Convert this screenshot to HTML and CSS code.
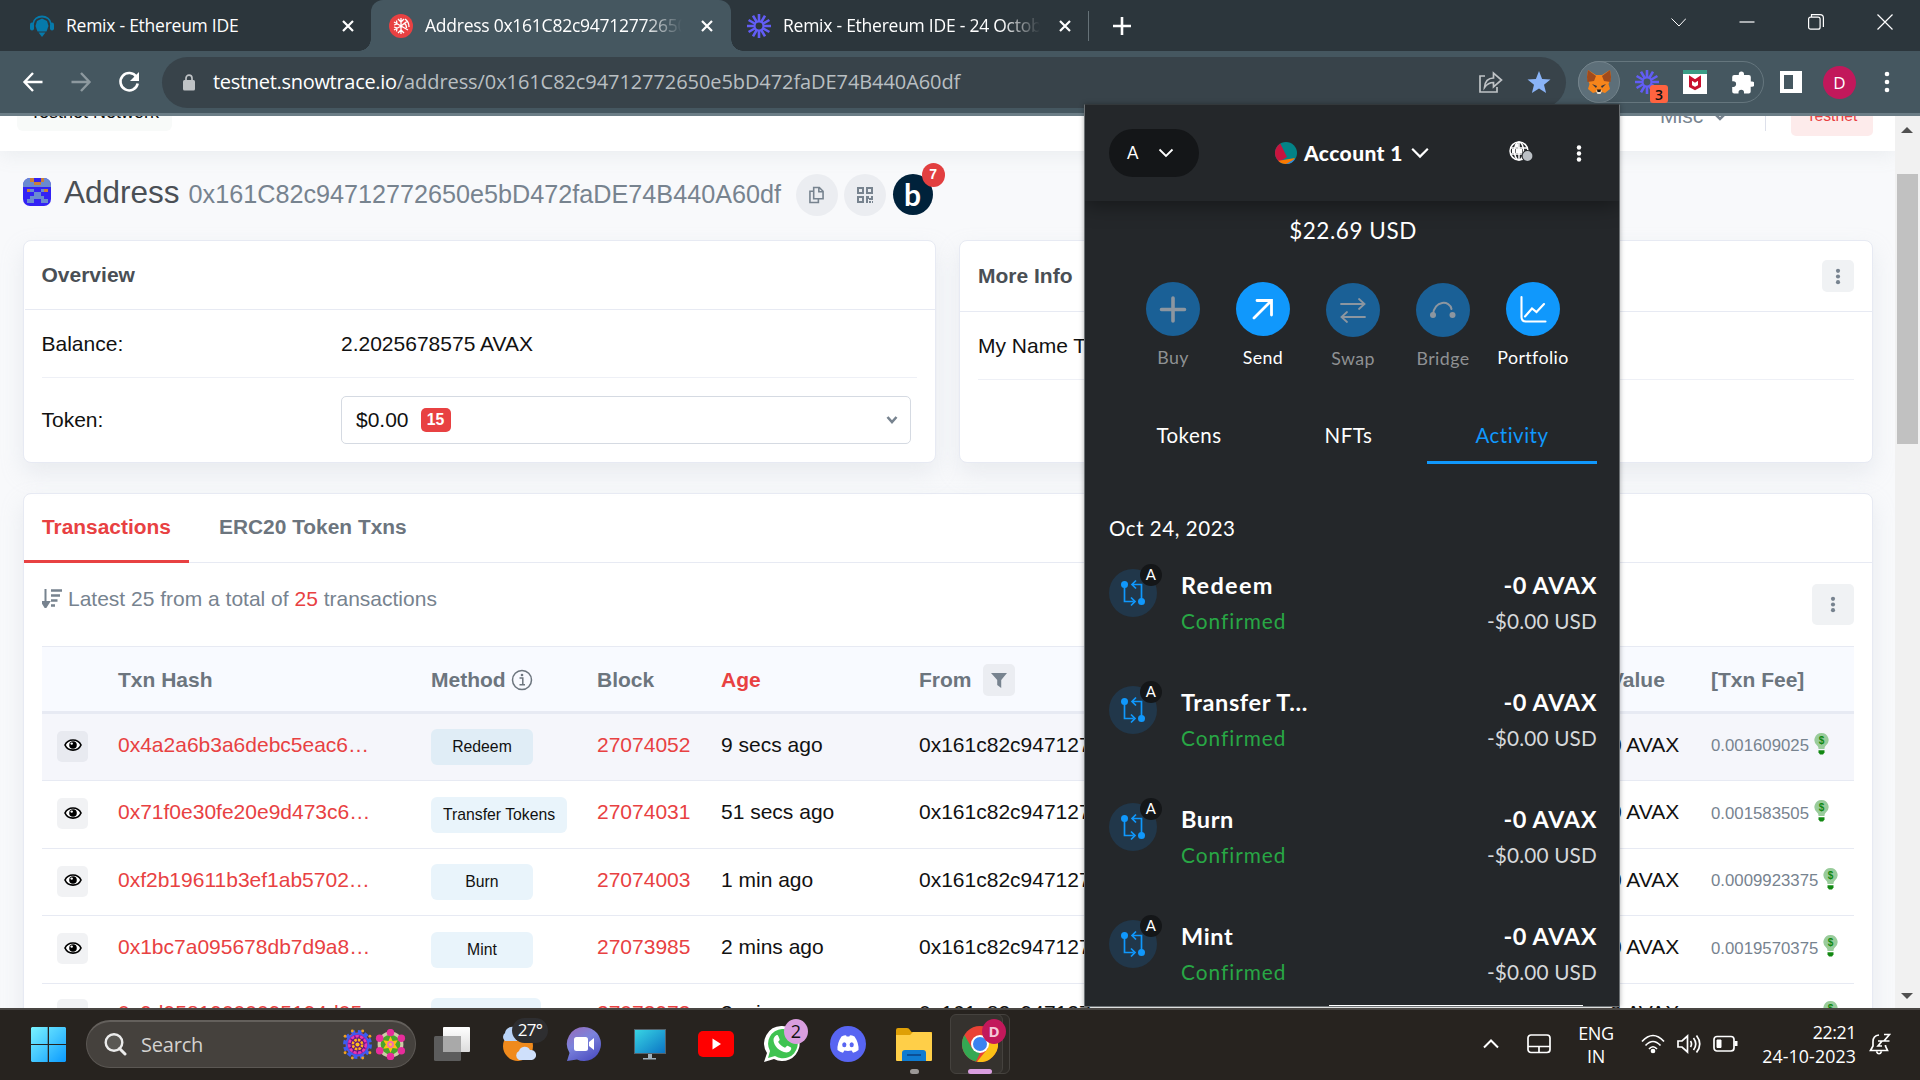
FILE: index.html
```html
<!DOCTYPE html>
<html lang="en">
<head>
<meta charset="utf-8">
<title>Address 0x161C82c94712772650e5bD472faDE74B440A60df</title>
<link rel="stylesheet" href="styles.css">
</head>
<body>
<svg class="defs" width="0" height="0">
  <symbol id="x" viewBox="0 0 14 14"><path d="M2 2l10 10M12 2L2 12" stroke="currentColor" stroke-width="2.2" fill="none"/></symbol>
  <symbol id="burst" viewBox="-12 -12 24 24"><g stroke="#625df5" stroke-width="2.6"><path d="M0-12V-4M0 4v8M-12 0h8M4 0h8M-10.4-6l6.9 4M3.5 2l6.9 4M-10.4 6l6.9-4M3.5-2l6.9-4M-6-10.4l4 6.9M2 3.5l4 6.9M6-10.4l-4 6.9M-2 3.5l-4 6.9"/><circle r="4.4" fill="none" stroke-width="2"/></g></symbol>
  <symbol id="chev" viewBox="0 0 16 10"><path d="M1.5 1.5L8 8l6.500-6.500" fill="none" stroke="currentColor" stroke-width="1.8"/></symbol>
  <symbol id="dots" viewBox="0 0 6 18"><circle cx="3" cy="3" r="2.200"/><circle cx="3" cy="9" r="2.200"/><circle cx="3" cy="15" r="2.200"/></symbol>
  <symbol id="eye" viewBox="0 0 18 14"><path d="M1 7C4 .3 14 .3 17 7C14 13.700 4 13.700 1 7Z" fill="#fff" stroke="#000" stroke-width="1.700"/><circle cx="9" cy="7" r="3.800"/><circle cx="7.700" cy="5.600" r="1.200" fill="#fff"/></symbol>
  <symbol id="bulb" viewBox="0 0 15 22"><path d="M7.500 0a7 7 0 0 0-4.400 12.500c1 1 1.400 2 1.400 3.500h6c0-1.500.4-2.500 1.400-3.500A7 7 0 0 0 7.500 0z" fill="#99cc9b"/><path d="M4.500 17.200h6v2.300L9 21.600H6l-1.500-2z" fill="#128812"/><text x="7.500" y="11" text-anchor="middle" font-family="Liberation Sans" font-weight="700" font-size="10" fill="#128812">$</text></symbol>
  <symbol id="swapact" viewBox="0 0 48 48"><circle cx="24" cy="24" r="24" fill="#21374a"/><g fill="none" stroke="#1098fc" stroke-width="1.700"><path d="M15.500 16v16.500h9M22 28.500l4 4-4 4M32.500 32V15.500h-9M27 11.500l-4 4 4 4"/></g><circle cx="15.500" cy="15.500" r="3.500" fill="#1098fc"/><circle cx="32.500" cy="32.500" r="3.500" fill="#1098fc"/></symbol>
</svg>

<div class="browser">
  <div class="tabstrip">
    <div class="tab tab-first">
      <svg class="favicon" viewBox="0 0 24 24"><g fill="#067aab"><path d="M12 4.500l5 2.500 1.500 5-2 5.500h-9L5.500 12 7 7z"/><path d="M8.500 18.500h7L12 23z"/><rect x="0" y="8.500" width="4" height="8" rx="2"/><rect x="20" y="8.500" width="4" height="8" rx="2"/></g><path d="M3 10C4 0 20 0 21 10" fill="none" stroke="#067aab" stroke-width="1.800"/></svg>
      <span class="tab-title">Remix - Ethereum IDE</span>
      <svg class="tab-x"><use href="#x"/></svg>
    </div>
    <div class="tab tab-active">
      <svg class="favicon" viewBox="0 0 24 24"><circle cx="12" cy="12" r="12" fill="#e84142"/><g stroke="#fff" stroke-width="1.300" fill="none"><path d="M12 4v16M5 8l7 4 7 4M5 16l7-4 6.500-5M9 5l3 3 3-3M9 19l3-3 3 3M5 11l3-1-.5-3.500M5 13l3 1-.5 3.500M15 9c2 1 2.500 3 2.500 5M16 5c3 2 4 5 4 8"/></g></svg>
      <span class="tab-title fade">Address 0x161C82c94712772650e5bD</span>
      <svg class="tab-x"><use href="#x"/></svg>
    </div>
    <div class="tab tab-last">
      <svg class="favicon"><use href="#burst"/></svg>
      <span class="tab-title fade">Remix - Ethereum IDE - 24 October</span>
      <svg class="tab-x"><use href="#x"/></svg>
    </div>
    <svg class="new-tab" viewBox="0 0 18 18"><path d="M9 0v18M0 9h18" stroke="#fff" stroke-width="2.600"/></svg>
    <div class="win-controls">
      <svg viewBox="0 0 16 16"><path d="M1.500 4.500L9 12l7-7.500" stroke-width="1"/></svg>
      <svg viewBox="0 0 16 16"><path d="M0.500 8h15"/></svg>
      <svg viewBox="0 0 16 16"><rect x=".6" y="3.200" width="11.500" height="12" rx="2"/><path d="M3.500 3V.6H12c2 0 3.400 1.400 3.400 3.400V13"/></svg>
      <svg viewBox="0 0 16 16"><path d="M.5.5l15 15M15.500.5l-15 15"/></svg>
    </div>
  </div>

  <div class="toolbar">
    <div class="nav">
      <svg viewBox="0 0 22 22"><path d="M20.500 11H3M11 2L2.500 11l8.500 9" stroke="#fff"/></svg>
      <svg viewBox="0 0 22 22"><path d="M1.500 11H19M11 2l8.500 9-8.500 9" stroke="#8d999f"/></svg>
      <svg viewBox="0 0 22 22"><path d="M18.500 6A8.700 8.700 0 1 0 19.700 12.500" stroke="#fff" stroke-width="2.600"/><path d="M21 1v9h-9z" fill="#fff"/></svg>
    </div>
    <div class="omnibox">
      <svg class="lock" viewBox="0 0 12 16"><rect y="5.500" width="12" height="10.500" rx="1.500" fill="#bfc3c6"/><path d="M3 6V3.700a3 3 0 0 1 6 0V6" fill="none" stroke="#bfc3c6" stroke-width="1.700"/></svg>
      <span class="url"><b>testnet.snowtrace.io</b><span>/address/0x161C82c94712772650e5bD472faDE74B440A60df</span></span>
      <svg class="share" viewBox="0 0 24 22"><path d="M1 8v13h17v-5M5.500 16.500c.5-6 3-9.500 9-9.500V2l8 7-8 7v-4.500c-4.500 0-6.500 1.500-9 5zM1 8V5h5" fill="none" stroke="#bfc3c6" stroke-width="1.700"/></svg>
      <svg class="star" viewBox="0 0 24 24"><path d="M12 1l3.100 7.900 8.400.5-6.500 5.400 2.100 8.200L12 18.400 4.900 23 7 14.800.5 9.400l8.400-.5z" fill="#8ab4f8"/></svg>
    </div>
    <div class="extensions">
      <span class="fox-bg"><svg viewBox="0 0 24 24"><path d="M1 0l8 5h6l8-5 1 8-2.500 6 1.500 5-5 4-3-1-2 2h-2l-2-2-3 1-5-4 1.500-5L0 8z" fill="#f6851b"/><path d="M1 0l8 6-2 5-6.500 1L0 7zM23 0l-8 6 2 5 6.500 1L24 7z" fill="#a04a1c"/><path d="M5 14l5 2-1 2zM19 14l-5 2 1 2z" fill="#33323e"/><path d="M9 20.500h6L13.500 24h-3z" fill="#e8e0d5"/><path d="M10 19.500h4l-.5 2.500h-3z" fill="#161616"/></svg></span>
      <span class="loom"><svg><use href="#burst"/></svg><i>3</i></span>
      <svg class="shield" viewBox="0 0 24 24"><path fill="#fff" d="M0 0h24v24H0z"/><path fill="#3b9d86" d="M0 0h24v4H0z"/><path d="M7.500 8v8L12 18.500l4.500-2.500V8L12 11z" fill="none" stroke="#c8102e" stroke-width="3"/></svg>
      <svg class="puzzle" viewBox="0 0 22 22"><path d="M20 10h-1.200V5.500a2 2 0 0 0-2-2H12V2.700a2.600 2.600 0 0 0-5.200 0v.8H2.200a2 2 0 0 0-2 2v4.300h1.100a2.800 2.800 0 0 1 0 5.600H.2V20a2 2 0 0 0 2 2h4.300v-1.100a2.700 2.700 0 0 1 5.500 0V22h4.700a2 2 0 0 0 2-2v-4.700H20a2.600 2.600 0 0 0 0-5.300z" fill="#fff"/></svg>
    </div>
    <svg class="panel-ic" viewBox="0 0 22 22"><path d="M0 0h22v22H0z" fill="#fff"/><path d="M4 4h9v14H4z" fill="#455760"/></svg>
    <span class="profile">D</span>
    <svg class="menu-dots" viewBox="0 0 6 24"><circle cx="3" cy="4" r="2.300"/><circle cx="3" cy="12" r="2.300"/><circle cx="3" cy="20" r="2.300"/></svg>
  </div>

  <div class="viewport">
    <main class="content">
      <header class="site-header">
        <span class="network">Testnet Network</span>
        <span class="misc">Misc <svg viewBox="0 0 14 9"><path d="M2 2l5 5 5-5" fill="none" stroke="#77838f" stroke-width="2.600"/></svg></span>
        <span class="vline"></span>
        <span class="testnet">Testnet</span>
      </header>

      <div class="title-row">
        <svg class="identicon" viewBox="0 0 8 8" shape-rendering="crispEdges" preserveAspectRatio="none"><path fill="#3322f5" d="M0 0h8v8H0z"/><path fill="#6a8ad0" d="M0 0h3v1H0zM5 0h3v1H5zM0 1h3v1H0zM5 1h3v1H5zM0 2h8v.7H0zM2 3h1v1H2zM5 3h1v1H5zM3 4h2v1H3zM2 5h1v2H2zM5 5h1v2H5zM3 5h2v1H3zM1 6h1v1H1zM6 6h1v1H6z"/><path fill="#c8803a" d="M2 0h1v1H2zM5 0h1v1H5zM3 1h2v1H3zM1 3h1v1H1zM6 3h1v1H6z"/></svg>
        <h1>Address</h1>
        <span class="addr">0x161C82c94712772650e5bD472faDE74B440A60df</span>
        <span class="round"><svg viewBox="0 0 16 18" width="15" height="18"><path d="M5 1h6l4 4v8H5zM5 5H1v12h9v-4M10.500 1v4.500H15" fill="none" stroke="#77838f" stroke-width="1.700"/></svg></span>
        <span class="round r2"><svg viewBox="0 0 16 16" width="16" height="16"><g fill="none" stroke="#77838f" stroke-width="2"><path d="M1 1h5v5H1zM10 1h5v5h-5zM1 10h5v5H1z"/></g><path d="M9 9h3v2h2V9h2v4h-4v-1h-1v4H9zM12 14h2v2h-2zM15 14h1v2h-1z" fill="#77838f"/></svg></span>
        <span class="b-logo">b<i>7</i></span>
      </div>

      <div class="cards">
        <section class="card overview">
          <div class="card-head">Overview</div>
          <div class="kv"><span>Balance:</span><span>2.2025678575 AVAX</span></div>
          <div class="kv kv-token"><span>Token:</span><div class="select">$0.00<i>15</i><svg viewBox="0 0 14 10"><path d="M2.500 2l4.500 5 4.500-5" fill="none" stroke="#77838f" stroke-width="2.600"/></svg></div></div>
        </section>
        <section class="card info">
          <div class="card-head">More Info<span class="dot-btn"><svg><use href="#dots"/></svg></span></div>
          <div class="kv"><span>My Name Tag:</span></div>
        </section>
      </div>

      <section class="card txns">
        <div class="txn-tabs"><span class="on">Transactions</span><span>ERC20 Token Txns</span></div>
        <div class="summary">
          <svg viewBox="0 0 20 19"><path d="M3.500 0v14M0 13h7l-3.500 5.500z" stroke="#77838f" stroke-width="2" fill="#77838f"/><path d="M9 1.500h11M9 6.500h9M9 11.500h6.500M9 16.500h4" stroke="#77838f" stroke-width="2.400"/></svg>
          <span>Latest 25 from a total of <b>25</b> transactions</span>
          <span class="dot-btn wide"><svg><use href="#dots"/></svg></span>
        </div>
        <div class="table">
          <div class="row head"><span></span><span>Txn Hash</span><span class="inl">Method <svg class="inf" viewBox="0 0 22 22"><circle cx="11" cy="11" r="9.500" fill="none" stroke="#6c757e" stroke-width="1.500"/><path d="M8.500 9h3.300v6.500M8.500 15.700h5.500" fill="none" stroke="#6c757e" stroke-width="1.500"/><circle cx="11" cy="6" r="1.300" fill="#6c757e"/></svg></span><span>Block</span><span class="red">Age</span><span class="inl">From <i class="filter"><svg viewBox="0 0 18 18"><path d="M0 1h18l-6.500 8v9L7 14.500V9z" fill="#77838f"/></svg></i></span><span class="val">Value</span><span>[Txn Fee]</span></div>
          <div class="row hover"><i class="eye"><svg><use href="#eye"/></svg></i><a>0x4a2a6b3a6debc5eac6…</a><em>Redeem</em><a>27074052</a><span>9 secs ago</span><span>0x161c82c947127</span><span class="val">0 AVAX</span><small>0.001609025<svg><use href="#bulb"/></svg></small></div>
          <div class="row"><i class="eye"><svg><use href="#eye"/></svg></i><a>0x71f0e30fe20e9d473c6…</a><em>Transfer Tokens</em><a>27074031</a><span>51 secs ago</span><span>0x161c82c947127</span><span class="val">0 AVAX</span><small>0.001583505<svg><use href="#bulb"/></svg></small></div>
          <div class="row"><i class="eye"><svg><use href="#eye"/></svg></i><a>0xf2b19611b3ef1ab5702…</a><em>Burn</em><a>27074003</a><span>1 min ago</span><span>0x161c82c947127</span><span class="val">0 AVAX</span><small>0.0009923375<svg><use href="#bulb"/></svg></small></div>
          <div class="row"><i class="eye"><svg><use href="#eye"/></svg></i><a>0x1bc7a095678db7d9a8…</a><em>Mint</em><a>27073985</a><span>2 mins ago</span><span>0x161c82c947127</span><span class="val">0 AVAX</span><small>0.0019570375<svg><use href="#bulb"/></svg></small></div>
          <div class="row last"><i class="eye"><svg><use href="#eye"/></svg></i><a>0x9d95819000095194d05…</a><em>Add Liquidity</em><a>27073973</a><span>3 mins ago</span><span>0x161c82c947127</span><span class="val">0 AVAX</span><small>0.0025703750<svg><use href="#bulb"/></svg></small></div>
        </div>
      </section>
    </main>
    <div class="scrollbar"><i class="up"></i><span class="thumb"></span><i class="down"></i></div>
  </div>

  <aside class="wallet">
    <div class="w-head">
      <span class="w-net">A<svg><use href="#chev"/></svg></span>
      <span class="w-acct"><svg class="jazz" viewBox="0 0 22 22"><clipPath id="jc"><circle cx="11" cy="11" r="11"/></clipPath><g clip-path="url(#jc)"><path fill="#038387" d="M0 0h22v22H0z"/><path fill="#c8143e" d="M-2 4L5 1l7 14-8 5-6-2z"/><path fill="#fa7900" d="M2 19l18-3-6 8H4z"/><path fill="#1d8cf0" d="M11 22l9-5 2 5z"/></g></svg>Account 1<svg class="big"><use href="#chev"/></svg></span>
      <span class="w-icons"><svg class="globe" viewBox="0 0 24 22"><g fill="none" stroke="#fff" stroke-width="1.500"><circle cx="10" cy="10" r="9"/><ellipse cx="10" cy="10" rx="4.500" ry="9"/><path d="M1 7h18M1 13h18M10 1v18"/></g><path d="M3 8h3v4H3zM7 8h6v4H7zM7 2.500h2.500V6H6z" fill="#fff"/><circle cx="18.500" cy="15" r="6" fill="#24272a"/><circle cx="18.500" cy="15" r="4.900" fill="#bbc0c5"/></svg><svg class="wd"><use href="#dots"/></svg></span>
    </div>
    <div class="w-balance">$22.69 USD</div>
    <div class="w-actions">
      <div class="off"><svg viewBox="0 0 54 54"><circle cx="27" cy="27" r="27"/><path d="M27 16v23M15.500 27.500h23" stroke-width="3.600"/></svg>Buy</div>
      <div><svg viewBox="0 0 54 54"><circle cx="27" cy="27" r="27"/><path d="M18 36l17-17M21 18.500h14.500V33" stroke-width="2.800"/></svg>Send</div>
      <div class="off low"><svg viewBox="0 0 54 54"><circle cx="27" cy="27" r="27"/><path d="M15 21h23M33 16l5.500 5-5.500 5M39 34H16M21 29l-5.500 5 5.500 5" stroke-width="1.800"/></svg>Swap</div>
      <div class="off low"><svg viewBox="0 0 54 54"><circle cx="27" cy="27" r="27"/><path d="M17 32C18 17 34 17 35.500 26" stroke-width="2"/><g class="nodes"><circle cx="17" cy="32" r="3"/><circle cx="36.500" cy="32" r="3"/></g></svg>Bridge</div>
      <div><svg viewBox="0 0 54 54"><circle cx="27" cy="27" r="27"/><path d="M15.500 15v20q0 4.500 4.500 4.500h19.500M19 34.500l7-8 4.500 3.500 7.500-8" stroke-width="2.100"/></svg>Portfolio</div>
    </div>
    <div class="w-tabs"><span>Tokens</span><span>NFTs</span><span class="on">Activity</span></div>
    <div class="w-date">Oct 24, 2023</div>
    <div class="w-row"><span class="ic"><svg><use href="#swapact"/></svg><i>A</i></span><div><b class="spread">Redeem</b><p>Confirmed</p></div><div class="amt"><b>-0 AVAX</b><p>-$0.00 USD</p></div></div>
    <div class="w-row"><span class="ic"><svg><use href="#swapact"/></svg><i>A</i></span><div><b>Transfer T...</b><p>Confirmed</p></div><div class="amt"><b>-0 AVAX</b><p>-$0.00 USD</p></div></div>
    <div class="w-row"><span class="ic"><svg><use href="#swapact"/></svg><i>A</i></span><div><b>Burn</b><p>Confirmed</p></div><div class="amt"><b>-0 AVAX</b><p>-$0.00 USD</p></div></div>
    <div class="w-row"><span class="ic"><svg><use href="#swapact"/></svg><i>A</i></span><div><b>Mint</b><p>Confirmed</p></div><div class="amt"><b>-0 AVAX</b><p>-$0.00 USD</p></div></div>
    <span class="w-edge"></span>
  </aside>
</div>

<footer class="taskbar">
  <svg class="start" viewBox="0 0 35 35"><defs><linearGradient id="wg" x1="0" y1="0" x2="1" y2="1"><stop offset="0" stop-color="#7af3ff"/><stop offset=".5" stop-color="#45c8ff"/><stop offset="1" stop-color="#0a9aff"/></linearGradient></defs><path fill="url(#wg)" d="M1 0h15.700v17H0V1zM18 0h16l1 1v16H18zM0 18h16.700v17H1l-1-1zM18 18h17v16l-1 1H18z"/></svg>
  <div class="search">
    <svg class="mag" viewBox="0 0 23 23"><circle cx="10" cy="9.500" r="8.300" fill="#5a5854" stroke="#ececec" stroke-width="2.400"/><path d="M15.500 15.500l5.500 5.500" stroke="#ececec" stroke-width="3" stroke-linecap="round"/></svg>
    <span>Search</span>
    <svg class="flower" viewBox="-15 -15 30 30"><circle r="11.500" fill="#e02aa0" stroke="#3c5cf0" stroke-width="5" stroke-dasharray="3.600 2.420"/><circle r="10.500" fill="#a3179a" stroke="#3c5cf0" stroke-width="1.500"/><circle r="8" fill="#5e1280" stroke="#e83ab0" stroke-width="2.500" stroke-dasharray="3 1.450"/><circle r="4.500" fill="none" stroke="#ffb31a" stroke-width="2.500" stroke-dasharray="2.500 1"/><circle r="2" fill="#ffc21a"/><g fill="#f0a020"><circle cx="5" cy="-13" r="1.400"/><circle cx="-5" cy="-13" r="1.400"/><circle cx="5" cy="13" r="1.400"/><circle cx="-5" cy="13" r="1.400"/><circle cx="12" cy="-8" r="1.400"/><circle cx="-12" cy="-8" r="1.400"/><circle cx="12" cy="8" r="1.400"/><circle cx="-12" cy="8" r="1.400"/></g></svg>
    <svg class="flower" viewBox="-15 -15 30 30"><circle r="11" fill="#4aa52a" stroke="#cfcaa8" stroke-width="3"/><g fill="#e82c9c"><circle cy="-11.500" r="3.600"/><circle cy="11.500" r="3.600"/><circle cx="10.500" cy="-6" r="3.600"/><circle cx="-10.500" cy="-6" r="3.600"/><circle cx="10.500" cy="6" r="3.600"/><circle cx="-10.500" cy="6" r="3.600"/></g><path d="M0-8l2 4.500L7-4 4.500 0 7 4 2 3.500 0 8l-2-4.500L-7 4-4.500 0-7-4-2-3.500z" fill="#ffbe12"/><circle r="3.300" fill="#f76fae"/><circle r="1.400" fill="#ffd02a"/></svg>
  </div>
  <div class="apps">
    <div class="app"><svg viewBox="0 0 36 36"><defs><linearGradient id="tv" x2="0" y2="1"><stop stop-color="#fff"/><stop offset="1" stop-color="#dcdcdc"/></linearGradient></defs><rect x="9" y="1" width="27" height="25" rx="1" fill="url(#tv)"/><rect x="0" y="10" width="27" height="25" rx="1.500" fill="#5c5c5c"/><path d="M9 10h18v16H9z" fill="#a9a9a9"/></svg></div>
    <div class="app"><svg viewBox="0 0 36 36"><circle cx="18" cy="20" r="15" fill="#f08a1c"/><path d="M5 15a5 5 0 0 1 0-8 7 7 0 0 1 12-4v12z" fill="#b9d3f7"/><path d="M19 34a5 5 0 0 1 0-9 6 6 0 0 1 11-1 5 5 0 0 1 2 10z" fill="#cfe0fb"/></svg><i class="temp">27°</i></div>
    <div class="app"><svg viewBox="0 0 36 36"><defs><linearGradient id="ch" x1="0" x2=".6" y2="1"><stop stop-color="#9a6ab8"/><stop offset=".5" stop-color="#7b83dc"/><stop offset="1" stop-color="#5254c4"/></linearGradient></defs><path d="M18 1a17 17 0 1 1-7 32.500L1 35l2.500-8A17 17 0 0 1 18 1z" fill="url(#ch)"/><rect x="8" y="11" width="14" height="14" rx="2.500" fill="#fff"/><path d="M23 16l5-4v12l-5-4z" fill="#fff"/></svg></div>
    <div class="app"><svg viewBox="0 0 36 36"><defs><linearGradient id="mo" x2="1" y2="1"><stop stop-color="#38d6e4"/><stop offset="1" stop-color="#0b73c4"/></linearGradient></defs><rect x="2.500" y="3.500" width="31" height="24" fill="url(#mo)" stroke="#54626c"/><path d="M16 28h4v4h4v1.500H11V32h5z" fill="#9fb0bb"/></svg></div>
    <div class="app"><svg viewBox="0 0 36 36"><rect y="5" width="36" height="26" rx="5" fill="#f00"/><path d="M14.500 12.500l8.500 5.500-8.500 5.500z" fill="#fff"/></svg></div>
    <div class="app"><svg viewBox="0 0 36 36"><path d="M18 0a17.500 17.500 0 1 1-8 33L0 36l3-9A17.500 17.500 0 0 1 18 0z" fill="#fff"/><path d="M18 3a14.700 14.700 0 1 1-7 27l-7 2 2-7A14.700 14.700 0 0 1 18 3z" fill="#3fc351"/><path d="M12 9.500c1.500-1 2 0 2.500 1l1.200 3c0 1-1.200 1.600-1.500 2.500 1.800 3 4 4.600 6.800 5.800 1-.4 1.600-2 2.600-2l3.400 1.700c1 2-1.500 5-4.500 5-7-.5-13-7-13-12.500 0-2 1-3.500 2.500-4.500z" fill="#fff"/></svg><i class="wab">2</i></div>
    <div class="app"><svg viewBox="0 0 36 36"><circle cx="18" cy="18" r="18" fill="#5865f2"/><path d="M11.500 10.500q2.500-1.200 4.500-1.300l.7 1.300h2.600l.7-1.300q2 .1 4.500 1.300 4.500 6.500 4 13.500-2.500 2-5.500 2.800l-1.400-2.200q-3.600.8-7.200 0L13 26.800Q10 26 7.500 24 7 17 11.500 10.500z" fill="#fff"/><ellipse cx="14.300" cy="18.800" rx="2.100" ry="2.500" fill="#5865f2"/><ellipse cx="21.700" cy="18.800" rx="2.100" ry="2.500" fill="#5865f2"/></svg></div>
    <div class="app"><svg viewBox="0 0 36 36"><path d="M0 4q0-2 2-2h9q2 0 3 2l1.500 2H36v6H0z" fill="#dfa006"/><path d="M0 9h14l3-3h17q2 0 2 2v26q0 1-1 1H1q-1 0-1-1z" fill="#ffcf48"/><path d="M6 35V27q0-3 3-3h18q3 0 3 3v8z" fill="#0f7bd0"/><path d="M11 29h14" stroke="#0b4f96" stroke-width="2"/></svg><u class="run"></u></div>
    <div class="app chrome"><span class="tile2"></span><span class="tile"></span><svg viewBox="0 0 36 36"><circle cx="18" cy="18" r="18" fill="#e94235"/><path d="M2.400 9L10.200 22.500 18 27 14 35.600A18 18 0 0 1 2.400 9z" fill="#34a853"/><path d="M18 9.500h15.800A18 18 0 0 1 15 35.800L25.800 22.500z" fill="#fbc116"/><circle cx="18" cy="18" r="9" fill="#fff"/><circle cx="18" cy="18" r="7" fill="#3b82f0"/></svg><i class="cb">D</i><u class="run wide"></u></div>
  </div>
  <div class="tray">
    <svg class="t-up" viewBox="0 0 16 10"><path d="M1 8.500l7-7 7 7" stroke-width="2"/></svg>
    <svg class="t-pad" viewBox="0 0 24 20"><rect x="1" y="1" width="22" height="17.500" rx="3"/><path d="M1 12.500h22M12 12.500v6"/></svg>
    <span class="t-lang">ENG<br>IN</span>
    <svg class="t-wifi" viewBox="0 0 24 20"><path d="M1 7.500q11-12 22 0M4.500 11.500q7.500-8 15 0M8 15q4-4.500 8 0"/><circle cx="12" cy="17" r="1.500" fill="#fff"/></svg>
    <svg class="t-vol" viewBox="0 0 24 20"><path d="M1 7h4l5.500-5v16L5 13H1zM13.500 7q2 3 0 6M16.500 4q4.500 6 0 12M19.500 1.500q6.500 8.500 0 17"/></svg>
    <svg class="t-bat" viewBox="0 0 25 18"><rect x="1" y="1.500" width="20" height="14.500" rx="3"/><path d="M4 5h4v7.500H4z" fill="#fff" stroke-width="1"/><path d="M23 6v5" stroke-width="3"/></svg>
    <span class="t-time"><span>22:21</span><br>24-10-2023</span>
    <svg class="t-bell" viewBox="0 0 22 24"><path d="M10 3C6 3.500 4 6 4 9.500V14l-2.500 4.500h17L16.500 14v-1M7.500 19.500c1 3 4 3 5 0M9 9h4l-4 5h4M15 2.500h5.500L15 9h5.500"/></svg>
  </div>
</footer>
</body>
</html>
```
FILE: styles.css
```css
* { box-sizing: border-box; }
body { margin: 0; width: 1920px; height: 1080px; overflow: hidden; font-family: "Liberation Sans", Arial, sans-serif; background: #27231f; }
i, em { font-style: normal; }
svg { display: block; flex: none; }
.defs { position: absolute; }
.browser { position: relative; height: 1008px; overflow: hidden; }

/* Tab strip */
.tabstrip { height: 51px; background: #2c363c; display: flex; align-items: center; font: 17.500px "Open Sans", sans-serif; letter-spacing: -.25px; color: #fff; }
.tab { height: 51px; display: flex; align-items: center; position: relative; }
.tab-first { width: 371px; padding: 0 16px 0 30px; }
.tab-active { width: 360px; padding: 0 17px 0 18px; background: #455760; border-radius: 12px 12px 0 0; }
.tab-active::before, .tab-active::after { content: ""; position: absolute; bottom: 0; width: 12px; height: 12px; background: radial-gradient(circle at 0 0, #2c363c 11.500px, #455760 12px); }
.tab-active::before { left: -12px; }
.tab-active::after { right: -12px; transform: scaleX(-1); }
.tab-last { width: 359px; padding: 0 18px 0 16px; }
.tab-last::after { content: ""; position: absolute; right: 1px; top: 11px; width: 1.500px; height: 30px; background: #667278; }
.favicon { width: 24px; height: 24px; margin-right: 12px; }
.tab-title { flex: 1; white-space: nowrap; overflow: hidden; line-height: 30px; margin: -1px 18px 0 0; }
.fade { -webkit-mask: linear-gradient(90deg, #000 85%, transparent); mask: linear-gradient(90deg, #000 85%, transparent); }
.tab-x { width: 14px; height: 14px; }
.new-tab { width: 18px; height: 18px; margin-left: 23px; }
.win-controls { margin-left: auto; display: flex; gap: 53px; padding-right: 27px; height: 43px; align-items: center; align-self: flex-start; }
.win-controls svg { width: 16px; height: 16px; fill: none; stroke: #fff; stroke-width: 1.200; }

/* Toolbar */
.toolbar { height: 65px; border-bottom: 3px solid #6b7d86; background: #455760; display: flex; align-items: center; font-family: "Open Sans", sans-serif; }
.nav { width: 162px; padding-left: 22px; display: flex; gap: 26px; }
.nav svg { width: 22px; height: 22px; fill: none; stroke-width: 2.400; }
.omnibox { width: 1404px; height: 51px; border-radius: 26px; background: #38434a; display: flex; align-items: center; padding: 0 15px 0 21px; }
.lock { width: 12px; height: 17px; margin-right: 18px; }
.url { font-size: 20px; color: #b9bfc2; white-space: nowrap; flex: 1; line-height: 30px; letter-spacing: -.08px; }
.url b { font-weight: 400; color: #fff; letter-spacing: -.3px; }
.share { width: 24px; height: 22px; margin-right: 24px; }
.star { width: 24px; height: 24px; }
.extensions { margin-left: 12px; width: 186px; height: 42px; border: 1.500px solid #65767e; border-radius: 21px; display: flex; align-items: center; }
.fox-bg { width: 42px; height: 42px; margin-left: -1px; border-radius: 50%; background: #5d6f79; border: 1px solid #74848c; display: flex; align-items: center; justify-content: center; }
.fox-bg svg, .loom svg, .shield { width: 24px; height: 24px; }
.loom { margin-left: 15px; position: relative; }
.loom i { position: absolute; left: 15px; top: 15px; width: 18px; height: 18px; border-radius: 3px; background: #ff6340; color: #111; font: 600 14px/20px "Open Sans", sans-serif; text-align: center; }
.shield { margin-left: 24px; }
.puzzle { width: 22px; height: 23px; margin-left: 25px; }
.panel-ic { width: 22px; height: 22px; margin-left: 16px; }
.profile { width: 33px; height: 33px; margin-left: 21px; border-radius: 50%; background: #c2185b; color: #fff; font-size: 17px; line-height: 33px; text-align: center; }
.menu-dots { width: 6px; height: 24px; margin-left: 28px; fill: #fff; }

/* Page */
.viewport { display: flex; height: 892px; }
.content { width: 1895px; background: #f8f9fb; overflow: hidden; font-size: 21px; color: #111; }
.site-header { height: 35px; background: #fff; display: flex; align-items: flex-start; padding-left: 17px; box-shadow: 0 4px 20px rgba(140,152,164,.13); }
.network { margin-top: -24px; width: 155px; height: 39px; border-radius: 6px; background: #f8faf9; font-size: 18px; line-height: 40px; text-align: center; white-space: nowrap; }
.misc { margin: -15px 0 0 1488px; width: 105px; color: #77838f; line-height: 30px; font-size: 21px; display: flex; align-items: center; gap: 10px; }
.misc svg { width: 14px; height: 9px; }
.vline { width: 1px; height: 15px; background: #dde0ea; margin-right: 25px; }
.testnet { margin-top: -16px; width: 82px; height: 36px; border-radius: 5px; background: #fdebeb; color: #e84142; font-size: 15.750px; line-height: 32px; text-align: center; }
.title-row { height: 89px; display: flex; align-items: center; padding: 0 0 2px 23px; }
.identicon { width: 28px; height: 28px; border-radius: 7px; margin-right: 13px; margin-bottom: 6px; }
h1 { margin: 0 9px 6px 0; font-size: 31.500px; font-weight: 400; color: #4a4f55; line-height: 40px; }
.addr { font-size: 25.200px; color: #77838f; width: 607px; line-height: 32px; margin-bottom: 2px; }
.round { width: 42px; height: 42px; border-radius: 50%; background: #ebedf1; display: flex; align-items: center; justify-content: center; margin-right: 6px; }
.b-logo { position: relative; width: 40px; height: 41px; margin-left: 1px; border-radius: 50%; background: #00223b; color: #fff; font: 700 30px/41px "Lato", sans-serif; text-align: center; }
.b-logo i { position: absolute; left: 29px; top: -11px; width: 23px; height: 24px; border-radius: 50%; background: #e23f40; font: 700 14px/23px "Liberation Sans", sans-serif; }
.cards { display: flex; gap: 23px; padding-left: 23px; }
.card { background: #fff; border: 1px solid #e7eaf3; border-radius: 8px; box-shadow: 0 10px 22px rgba(189,197,209,.25); }
.overview, .info { width: 913px; height: 223px; padding: 0 18px 0 17.500px; }
.info { width: 914px; padding: 0 18px; }
.card-head { height: 69px; margin: 0 -18px 0 -17px; padding: 0 17px 1px; border-bottom: 1px solid #e7eaf3; font-weight: 700; color: #4a4f55; display: flex; align-items: center; justify-content: space-between; }
.info .card-head { height: 71px; margin: 0 -18px; padding: 0 18px 0; }
.kv { height: 68px; border-bottom: 1px solid #eef0f6; display: grid; grid-template-columns: 299.500px 570px; align-items: center; }
.kv-token { height: 84px; border: 0; }
.select { height: 48px; border: 1px solid #d5dae2; border-radius: 5px; display: flex; align-items: center; padding: 0 11px 0 14px; }
.select i { margin-left: 12px; width: 30px; height: 24px; border-radius: 5px; background: #e84142; color: #fff; font: 700 15.750px/24px "Liberation Sans", sans-serif; text-align: center; }
.select svg { width: 14px; height: 10px; margin-left: auto; }
.dot-btn { width: 32px; height: 32px; border-radius: 5px; background: #f0f2f4; display: flex; align-items: center; justify-content: center; }
.dot-btn svg { width: 6px; height: 17px; fill: #77838f; }
.dot-btn.wide { width: 42px; height: 41px; margin: 10px 0 0 auto; }
.txns { width: 1850px; height: 700px; margin: 30px 0 0 23px; }
.txn-tabs { height: 69px; border-bottom: 1px solid #e7eaf3; display: flex; color: #6c757e; font-weight: 700; font-size: 20.900px; line-height: 66px; }
.txn-tabs .on { width: 165px; height: 69px; padding-left: 18px; margin-right: 30px; color: #e84142; border-bottom: 3px solid #e84142; }
.summary { height: 83px; padding: 0 18px 10px; display: flex; align-items: center; color: #77838f; }
.summary > svg { width: 20px; height: 19px; margin: 0 6px 2px 0; }
.summary > span:not(.dot-btn) { margin-bottom: 2px; }
.summary b { font-weight: 400; color: #e84142; }
.table { margin: 0 18px; border-top: 1px solid #e7eaf3; }
.row { display: grid; grid-template-columns: 76px 313px 166px 124px 198px 663px 129px 143px; height: 67.500px; border-bottom: 1px solid #e7eaf3; align-items: center; white-space: nowrap; padding-bottom: 5px; }
.row.head { height: 67px; border-bottom: 3px solid #e7eaf3; background: #f8faff; color: #6c757e; font-weight: 700; padding: 1px 0 0; }
.row.hover { background: #f5f6fb; height: 67.400px; padding-bottom: 5px; }
.row .val { padding-left: 28px; }
.row a, .red { color: #e84142; }
.inl { display: flex; align-items: center; }
.inf { width: 22px; height: 22px; margin-left: 5px; }
.filter { width: 32px; height: 32px; border-radius: 5px; background: #ebedf2; margin-left: 11px; display: flex; align-items: center; justify-content: center; }
.filter svg { width: 16px; height: 16px; }
.eye { width: 31px; height: 31px; margin: 3px 0 0 15px; border-radius: 5px; background: rgba(119,131,143,.1); display: flex; align-items: center; justify-content: center; }
.eye svg { width: 18px; height: 14px; margin-bottom: 2px; }
.row em { justify-self: start; min-width: 102px; height: 36px; margin-top: 5px; padding: 0 12px; border-radius: 6px; background: #e9f4fb; font-size: 15.750px; line-height: 35px; text-align: center; }
.row.hover em { background: #e0edf6; }
.row.last { padding-bottom: 8px; }
.row.last em { padding: 0 10px; }
.row small { font-size: 16.800px; color: #77838f; display: flex; align-items: center; padding-top: 3px; }
.row small svg { width: 15px; height: 22px; margin: -5px 0 0 5px; }
.scrollbar { width: 25px; background: #f1f1f1; display: flex; flex-direction: column; align-items: center; padding: 11px 1px 9px 0; }
.thumb { width: 21px; height: 270px; margin-top: 41px; background: #c1c1c1; }
.up, .down { border: 6px solid transparent; border-top: 0; border-bottom: 6px solid #505050; }
.down { border: 6px solid transparent; border-bottom: 0; border-top: 6px solid #505050; margin-top: auto; }

/* Wallet popup, floating over the page */
.wallet { position: absolute; left: 1084px; top: 104px; width: 536px; height: 903px; border: 1px solid #6c7174; border-top-color: #33383b; background: #24272a; box-shadow: 0 0 5px rgba(0,0,0,.3); color: #fff; font: 20px "Lato", sans-serif; letter-spacing: .55px; overflow: hidden; }
.w-head { height: 96px; display: grid; grid-template-columns: 161px 234px 110px; align-items: center; padding-left: 24px; box-shadow: 0 4px 20px rgba(0,0,0,.4); }
.w-net { width: 90px; height: 48px; border-radius: 24px; background: #141618; display: flex; align-items: center; gap: 19px; padding-left: 18px; font-size: 17px; line-height: 20px; }
.w-net svg { width: 16px; height: 10px; }
.w-acct { font-weight: 900; font-size: 21px; display: flex; align-items: center; letter-spacing: .4px; padding: 0 0 1px 5px; }
.jazz { width: 22px; height: 22px; margin-right: 7px; }
.big { width: 20px; height: 12px; margin-left: 7px; }
.w-icons { display: flex; align-items: center; margin-left: 5px; }
.globe { width: 24px; height: 22px; margin: 0 43px 3px 0; }
.wd { width: 6px; height: 19px; fill: #fff; }
.w-balance { margin-top: 13px; height: 36px; line-height: 34px; text-align: center; font-size: 22.500px; padding-left: 2px; }
.w-actions { display: grid; grid-template-columns: repeat(5, 90px); justify-content: center; margin: 32px 0 0 2px; height: 105px; font-size: 17.800px; text-align: center; letter-spacing: .4px; }
.w-actions svg { width: 54px; height: 54px; margin: 0 auto 10px; fill: none; stroke: #fff; stroke-linecap: round; }
.w-actions svg > circle { fill: #1098fc; stroke: none; }
.w-actions .off { color: #8f9193; }
.w-actions .off svg { stroke: #8c96a0; }
.w-actions .off svg > circle { fill: #1a6096; }
.off .nodes { fill: #8c96a0; stroke: none; }
.low { padding-top: 1px; }
.w-tabs { display: grid; grid-template-columns: 178px 159px 170px; margin: 16px 0 0 5px; height: 61px; text-align: center; line-height: 64px; font-size: 20.500px; letter-spacing: .5px; }
.w-tabs span:first-child { padding-left: 20px; }
.w-tabs span:nth-child(2) { padding-left: 2px; }
.w-tabs .on { height: 64px; color: #1098fc; border-bottom: 3px solid #1098fc; margin-top: -3px; line-height: 70px; }
.w-date { margin: 52px 0 28px 24px; height: 25px; line-height: 25px; font-size: 20.500px; }
.w-row { height: 117px; padding: 0 22px 0 24px; display: flex; align-items: flex-start; }
.ic { position: relative; width: 72px; }
.ic svg { width: 48px; height: 48px; }
.ic i { position: absolute; left: 31px; top: -5px; width: 22px; height: 22px; border-radius: 50%; background: #141618; font-size: 15px; line-height: 21px; text-align: center; }
.w-row b { display: block; font-size: 23.500px; line-height: 33px; letter-spacing: .6px; }
.w-row b.spread { letter-spacing: 1.300px; }
.w-row p { margin: 2px 0 0; line-height: 34px; color: #28a745; font-size: 20.800px; letter-spacing: 1px; }
.w-row .amt { margin-left: auto; text-align: right; }
.w-row .amt p { color: #d6d9dc; letter-spacing: .15px; }
.w-edge { position: absolute; left: 244px; bottom: 0; width: 254px; height: 1px; background: #fff; }

/* Taskbar */
.taskbar { height: 72px; border-top: 2px solid #494643; padding-bottom: 2px; background: #27231f; display: flex; align-items: center; font: 18px "Open Sans", sans-serif; color: #fff; }
.start { width: 35px; height: 35px; margin-left: 31px; }
.search { width: 330px; height: 48px; margin-left: 20px; border-radius: 24px; background: #45413d; border: 1px solid #5b5753; border-top: 2px solid #64605c; display: flex; align-items: center; padding: 0 9px 0 17px; color: #d4d2d0; font-size: 20px; letter-spacing: -.2px; }
.mag { width: 23px; height: 23px; margin-right: 14px; }
.search span { flex: 1; }
.flower { width: 31px; height: 31px; margin-left: 2px; }
.apps { display: flex; margin-left: 3px; height: 70px; }
.app { position: relative; width: 66px; height: 70px; display: flex; align-items: center; justify-content: center; }
.app > svg { width: 36px; height: 36px; position: relative; }
.temp { position: absolute; left: 27px; top: 9px; width: 36px; height: 25px; border-radius: 13px; background: #2e2e30; font-size: 17px; line-height: 24px; text-align: center; letter-spacing: -.8px; }
.wab { position: absolute; right: 7px; top: 10px; width: 24px; height: 25px; border-radius: 50%; background: #d99edf; color: #111; font-size: 18px; line-height: 25px; text-align: center; }
.cb { position: absolute; right: 7px; top: 10px; width: 24px; height: 25px; border-radius: 50%; background: #c2185b; color: #f5c6d8; font-size: 15px; font-weight: 700; line-height: 25px; text-align: center; }
.run { position: absolute; left: 29px; bottom: 5px; width: 9px; height: 5px; border-radius: 3px; background: #9b9896; }
.run.wide { left: 21px; width: 24px; background: #d99edf; }
.tile, .tile2 { position: absolute; left: 3px; top: 5px; width: 53px; height: 60px; border-radius: 6px; background: #35322e; border: 1px solid #45423e; }
.tile2 { left: 10px; background: #2d2a26; }
.tray { margin-left: auto; display: flex; align-items: center; padding-right: 29px; line-height: 23px; height: 70px; }
.tray svg { fill: none; stroke: #fff; stroke-width: 1.700; }
.t-up { width: 16px; height: 10px; margin-right: 28px; }
.t-pad { width: 24px; height: 20px; margin-right: 22px; }
.t-lang { width: 46px; text-align: center; letter-spacing: -.4px; margin-right: 22px; margin-top: 2px; }
.t-wifi { width: 24px; height: 20px; margin-right: 12px; }
.t-vol { width: 24px; height: 20px; margin-right: 12px; }
.t-bat { width: 25px; height: 18px; margin-right: 16px; }
.t-time { width: 102px; text-align: right; font-size: 17.800px; letter-spacing: .1px; margin-right: 13px; white-space: nowrap; line-height: 24px; margin-top: -1px; }
.t-time span { letter-spacing: -.4px; }
.t-bell { width: 22px; height: 24px; }
```
